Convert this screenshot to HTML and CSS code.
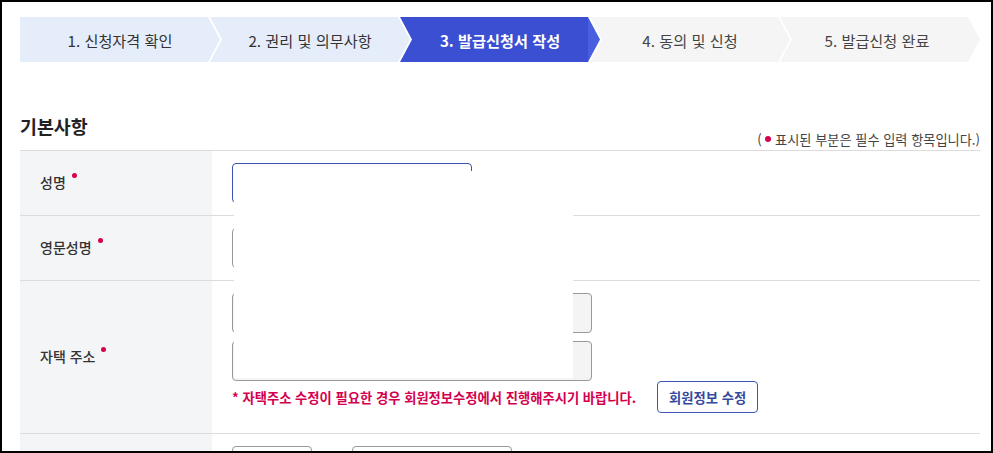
FILE: index.html
```html
<!DOCTYPE html>
<html lang="ko">
<head>
<meta charset="utf-8">
<title>발급신청서 작성</title>
<link rel="stylesheet" href="styles.css">
</head>
<body>
<div class="frame">
  <ol class="steps">
    <li class="step done">1. 신청자격 확인</li>
    <li class="step done">2. 권리 및 의무사항</li>
    <li class="step active">3. 발급신청서 작성</li>
    <li class="step todo">4. 동의 및 신청</li>
    <li class="step todo">5. 발급신청 완료</li>
  </ol>

  <div class="section-head">
    <h2 class="section-title">기본사항</h2>
    <p class="req-note">( <span class="dot"></span> 표시된 부분은 필수 입력 항목입니다.)</p>
  </div>

  <div class="form-table">
    <div class="row row-short">
      <div class="label">성명<span class="dot sup"></span></div>
      <div class="value"><div class="input input-name focus"></div></div>
    </div>
    <div class="row row-short">
      <div class="label">영문성명<span class="dot sup"></span></div>
      <div class="value"><div class="input input-name"></div></div>
    </div>
    <div class="row row-addr">
      <div class="label">자택 주소<span class="dot sup"></span></div>
      <div class="value addr">
        <div class="input input-addr readonly"></div>
        <div class="input input-addr readonly"></div>
        <div class="addr-foot">
          <p class="warn">* 자택주소 수정이 필요한 경우 회원정보수정에서 진행해주시기 바랍니다.</p>
          <button class="btn-outline" type="button">회원정보 수정</button>
        </div>
      </div>
    </div>
    <div class="row row-last">
      <div class="label"></div>
      <div class="value inline">
        <div class="input input-sm"></div>
        <div class="input input-md"></div>
      </div>
    </div>
  </div>

  <div class="mask"></div>
</div>
</body>
</html>
```

FILE: styles.css
```css
* { box-sizing: border-box; }

html, body {
  margin: 0;
  padding: 0;
  background: #fff;
}

body {
  font-family: "Noto Sans CJK KR", "Noto Sans", sans-serif;
  color: #333;
}

.frame {
  position: relative;
  width: 993px;
  height: 453px;
  border: 2px solid #000;
  overflow: hidden;
  padding: 15px 11px 0 18px;
}

/* ---------- stepper ---------- */
.steps {
  list-style: none;
  margin: 0;
  padding: 0;
  display: flex;
  height: 45px;
}

.step {
  flex: 0 0 200px;
  height: 45px;
  display: flex;
  align-items: center;
  justify-content: center;
  font-size: 15.2px;
  color: #333;
  margin-left: -10px;
  clip-path: polygon(0 0, calc(100% - 12px) 0, 100% 50%, calc(100% - 12px) 100%, 0 100%, 12px 50%);
}

.step:first-child {
  margin-left: 0;
  clip-path: polygon(0 0, calc(100% - 12px) 0, 100% 50%, calc(100% - 12px) 100%, 0 100%);
}

.step.done { background: #e5edfb; }
.step.todo { background: #f5f5f5; color: #444; }
.step.todo:last-child { padding-right: 6px; }
.step.active {
  background: linear-gradient(to right, #3a4fd2 0, #3a4fd2 calc(100% - 12px), #4a5fe0 calc(100% - 12px));
  color: #fff;
  font-weight: 700;
}

/* ---------- section header ---------- */
.section-head {
  display: flex;
  justify-content: space-between;
  align-items: flex-end;
  margin-top: 50px;
  height: 38px;
}

.section-title {
  margin: 0 0 11px;
  font-size: 18.4px;
  line-height: 26px;
  font-weight: 700;
  color: #222;
}

.req-note {
  margin: 0 0 1px;
  font-size: 13.2px;
  line-height: 18px;
  color: #444;
}

.dot {
  display: inline-block;
  width: 6px;
  height: 6px;
  border-radius: 50%;
  background: #d6004f;
  vertical-align: middle;
  position: relative;
  top: -2px;
}

/* ---------- form table ---------- */
.form-table {
  border-top: 1px solid #dcdcdc;
}

.row {
  display: grid;
  grid-template-columns: 192px 1fr;
  border-bottom: 1px solid #dcdcdc;
}

.row-short { height: 65px; }
.row-addr { height: 153px; }
.row-last { height: 40px; border-bottom: 0; }

.label {
  background: #f4f5f7;
  display: flex;
  align-items: center;
  padding-left: 20px;
  padding-bottom: 2px;
  font-size: 14px;
  font-weight: 500;
  color: #333;
}

.dot.sup {
  width: 5px;
  height: 5px;
  margin-left: 6px;
  top: -7px;
}

.value {
  padding: 12px 0 0 20px;
}

.input {
  height: 40px;
  border: 1px solid #999;
  border-radius: 4px;
  background: #fff;
}

.input-name { width: 240px; }
.input.focus { border-color: #3b51b5; }

.addr {
  display: flex;
  flex-direction: column;
  gap: 8px;
}

.input-addr { width: 360px; }
.input.readonly { background: #f4f4f4; }

.addr-foot {
  display: flex;
  align-items: center;
  gap: 21px;
  margin-top: -8px;
  height: 32px;
}

.warn {
  margin: 0;
  font-size: 13.3px;
  font-weight: 700;
  color: #d4004e;
}

.btn-outline {
  height: 32px;
  width: 101px;
  padding: 0;
  border: 1px solid #3b56b6;
  border-radius: 4px;
  background: #fff;
  color: #34489e;
  font-family: inherit;
  font-size: 13.3px;
  font-weight: 700;
}

.inline {
  display: flex;
  gap: 40px;
}

.input-sm { width: 80px; }
.input-md { width: 160px; }

/* redaction overlay */
.mask {
  position: absolute;
  left: 232px;
  top: 169px;
  width: 339px;
  height: 207px;
  background: #fff;
}
```
